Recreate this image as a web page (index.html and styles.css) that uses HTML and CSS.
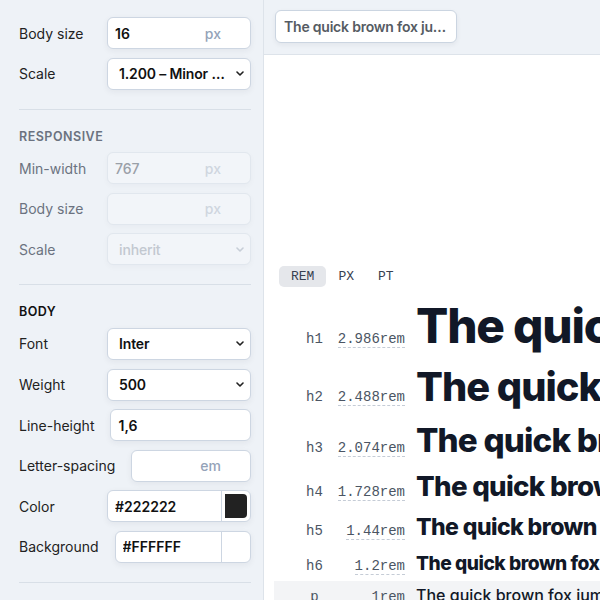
FILE: index.html
```
<!DOCTYPE html>
<html lang="en">
<head>
<meta charset="utf-8">
<title>Type scale</title>
<link rel="stylesheet" href="styles.css">
</head>
<body>
<div class="app">
  <aside class="sidebar">
    <section class="group first">
      <div class="field">
        <label>Body size</label>
        <div class="box"><input class="text" value="16"><span class="suffix">px</span></div>
      </div>
      <div class="field">
        <label>Scale</label>
        <div class="box select"><span class="value">1.200 – Minor Third</span><svg class="chev" viewBox="0 0 8 5" width="8" height="5"><path d="M1 1 L4 4 L7 1" fill="none" stroke="currentColor" stroke-width="1.6" stroke-linecap="round" stroke-linejoin="round"/></svg></div>
      </div>
    </section>

    <section class="group disabled">
      <h3 class="heading">Responsive</h3>
      <div class="field">
        <label>Min-width</label>
        <div class="box"><input class="text" value="767" disabled><span class="suffix">px</span></div>
      </div>
      <div class="field">
        <label>Body size</label>
        <div class="box"><input class="text" value="" disabled><span class="suffix">px</span></div>
      </div>
      <div class="field">
        <label>Scale</label>
        <div class="box select"><span class="value">inherit</span><svg class="chev" viewBox="0 0 8 5" width="8" height="5"><path d="M1 1 L4 4 L7 1" fill="none" stroke="currentColor" stroke-width="1.6" stroke-linecap="round" stroke-linejoin="round"/></svg></div>
      </div>
    </section>

    <section class="group">
      <h3 class="heading dark">Body</h3>
      <div class="field">
        <label>Font</label>
        <div class="box select"><span class="value">Inter</span><svg class="chev" viewBox="0 0 8 5" width="8" height="5"><path d="M1 1 L4 4 L7 1" fill="none" stroke="currentColor" stroke-width="1.6" stroke-linecap="round" stroke-linejoin="round"/></svg></div>
      </div>
      <div class="field">
        <label>Weight</label>
        <div class="box select"><span class="value">500</span><svg class="chev" viewBox="0 0 8 5" width="8" height="5"><path d="M1 1 L4 4 L7 1" fill="none" stroke="currentColor" stroke-width="1.6" stroke-linecap="round" stroke-linejoin="round"/></svg></div>
      </div>
      <div class="field">
        <label>Line-height</label>
        <div class="box"><input class="text" value="1,6"></div>
      </div>
      <div class="field">
        <label>Letter-spacing</label>
        <div class="box"><input class="text" value=""><span class="suffix">em</span></div>
      </div>
      <div class="field">
        <label>Color</label>
        <div class="box"><input class="text" value="#222222"><span class="swatch"><span class="chip dark-chip"></span></span></div>
      </div>
      <div class="field">
        <label>Background</label>
        <div class="box"><input class="text" value="#FFFFFF"><span class="swatch"><span class="chip"></span></span></div>
      </div>
    </section>

    <section class="group last"></section>
  </aside>

  <main class="main">
    <div class="topbar">
      <button class="sample-btn">The quick brown fox jumps over the lazy dog</button>
    </div>
    <div class="content">
      <div class="units">
        <span class="unit active">REM</span>
        <span class="unit">PX</span>
        <span class="unit">PT</span>
      </div>
      <div class="scale">
        <div class="row"><span class="tag">h1</span><span class="size"><span class="dash">2.986rem</span></span><span class="sample s-h1">The quick brown fox jumps over the lazy dog</span></div>
        <div class="row"><span class="tag">h2</span><span class="size"><span class="dash">2.488rem</span></span><span class="sample s-h2">The quick brown fox jumps over the lazy dog</span></div>
        <div class="row"><span class="tag">h3</span><span class="size"><span class="dash">2.074rem</span></span><span class="sample s-h3">The quick brown fox jumps over the lazy dog</span></div>
        <div class="row"><span class="tag">h4</span><span class="size"><span class="dash">1.728rem</span></span><span class="sample s-h4">The quick brown fox jumps over the lazy dog</span></div>
        <div class="row"><span class="tag">h5</span><span class="size"><span class="dash">1.44rem</span></span><span class="sample s-h5">The quick brown fox jumps over the lazy dog</span></div>
        <div class="row"><span class="tag">h6</span><span class="size"><span class="dash">1.2rem</span></span><span class="sample s-h6">The quick brown fox jumps over the lazy dog</span></div>
        <div class="row body-row"><span class="tag">p</span><span class="size"><span class="dash">1rem</span></span><span class="sample s-p">The quick brown fox jumps over the lazy dog</span></div>
      </div>
    </div>
  </main>
</div>
</body>
</html>
```

FILE: styles.css
```
* { box-sizing: border-box; }

html, body {
  margin: 0;
  padding: 0;
  width: 600px;
  height: 600px;
  overflow: hidden;
  background: #ffffff;
}

body {
  font-family: Inter, "Noto Sans", sans-serif;
  font-size: 14px;
  color: #1f2328;
}

.app {
  display: flex;
  width: 600px;
  height: 600px;
}

/* ---------- sidebar ---------- */
.sidebar {
  flex: 0 0 264px;
  width: 264px;
  min-width: 0;
  background: #eef2f7;
  border-right: 1px solid #dde3ea;
  padding: 0 12px 0 19px;
}

.group {
  padding: 19px 0;
  border-top: 1px solid #d8dfe7;
  display: flex;
  flex-direction: column;
  gap: 8.6px;
}

.group.first {
  border-top: none;
  padding-top: 17px;
}

.heading {
  margin: 0 0 -1px;
  font-size: 12.5px;
  line-height: 16px;
  font-weight: 600;
  letter-spacing: 0.04em;
  text-transform: uppercase;
  color: #6b7280;
}

.heading.dark { color: #111111; }

.field {
  display: flex;
  align-items: center;
  gap: 16px;
}

.field label {
  flex: 0 0 auto;
  min-width: 72px;
  color: #222222;
  font-size: 14px;
}

.box {
  flex: 1 1 0;
  min-width: 0;
  height: 32px;
  display: flex;
  align-items: center;
  background: #ffffff;
  border: 1px solid #cdd6e2;
  border-radius: 6px;
  box-shadow: 0 2px 6px rgba(30, 41, 59, 0.06);
  overflow: hidden;
}

.text {
  flex: 1 1 0;
  width: 0;
  min-width: 0;
  height: 100%;
  border: none;
  outline: none;
  background: transparent;
  padding: 0 0 0 7px;
  font-family: Inter, "Noto Sans", sans-serif;
  font-size: 14px;
  font-weight: 600;
  color: #111111;
}

.suffix {
  flex: 0 0 auto;
  padding-right: 29px;
  font-weight: 500;
  color: #94a3b8;
}

.select {
  padding: 0 5px 0 11px;
  gap: 4px;
}

.select .value {
  flex: 1 1 auto;
  min-width: 0;
  white-space: nowrap;
  overflow: hidden;
  text-overflow: ellipsis;
  font-weight: 600;
  letter-spacing: -0.01em;
  color: #111111;
}

.chev {
  flex: 0 0 auto;
  margin-right: 1px;
  color: #222222;
}

.swatch {
  flex: 0 0 29px;
  height: 100%;
  border-left: 1px solid #cdd6e2;
  padding: 3px;
  display: flex;
}

.chip {
  flex: 1;
  border-radius: 0 4px 4px 0;
  background: #ffffff;
}

.chip.dark-chip { background: #222222; }

/* disabled state */
.disabled .field label { color: #6b7280; }

.disabled .box {
  background: #f2f5f9;
  border-color: #e1e7ee;
  box-shadow: 0 2px 6px rgba(30, 41, 59, 0.03);
}

.disabled .text {
  font-weight: 500;
  color: #9aa0a8;
}

.disabled .suffix { color: #cfd6df; }

.disabled .select .value {
  font-weight: 500;
  color: #c2c8d0;
}

.disabled .chev { color: #c7ced7; }

/* ---------- main ---------- */
.main {
  flex: 1 1 0;
  min-width: 0;
  display: flex;
  flex-direction: column;
  overflow: hidden;
}

.topbar {
  flex: 0 0 55px;
  background: #eef2f7;
  border-bottom: 1px solid #dde3ea;
  padding: 10px 11px;
}

.sample-btn {
  display: block;
  width: 182px;
  height: 33px;
  padding: 0 8px;
  background: #ffffff;
  border: 1px solid #cbd5e1;
  border-radius: 6px;
  box-shadow: 0 2px 5px rgba(30, 41, 59, 0.06);
  font-family: Inter, "Noto Sans", sans-serif;
  font-size: 14px;
  font-weight: 600;
  letter-spacing: -0.015em;
  color: #555b63;
  text-align: left;
  white-space: nowrap;
  overflow: hidden;
  text-overflow: ellipsis;
}

.content {
  padding: 211px 0 0 10px;
}

.units {
  display: flex;
  padding-left: 5px;
  margin-bottom: 6px;
}

.unit {
  height: 21px;
  line-height: 21px;
  padding: 0 12px;
  border-radius: 5px;
  font-family: "Liberation Mono", "DejaVu Sans Mono", monospace;
  font-size: 13px;
  color: #374151;
}

.unit.active { background: #e5e7eb; }

.scale {
  display: flex;
  flex-direction: column;
}

.row {
  display: flex;
  align-items: baseline;
  padding: 6.5px 0 6.5px 25px;
  white-space: nowrap;
}

.tag {
  flex: 0 0 31px;
  text-align: center;
  font-family: "Liberation Mono", "DejaVu Sans Mono", monospace;
  font-size: 14px;
  color: #4b5563;
}

.size {
  flex: 0 0 75px;
  text-align: right;
  font-family: "Liberation Mono", "DejaVu Sans Mono", monospace;
  font-size: 14px;
  color: #4b5563;
}

.dash {
  border-bottom: 1px dashed #c5ccd6;
}

.sample {
  flex: 0 0 auto;
  margin-left: 11px;
  font-family: Inter, "Noto Sans", sans-serif;
  font-weight: 800;
  letter-spacing: -0.025em;
  color: #111827;
  line-height: 1.1;
}

.s-h1 { font-size: 47.78px; }
.s-h2 { font-size: 39.81px; }
.s-h3 { font-size: 33.18px; }
.s-h4 { font-size: 27.65px; }
.s-h5 { font-size: 23.04px; }
.s-h6 { font-size: 19.2px; }
.s-p  { font-size: 16px; font-weight: 500; letter-spacing: 0; line-height: 1.6; }

.body-row { background: #f3f4f6; padding-top: 2px; }
```
